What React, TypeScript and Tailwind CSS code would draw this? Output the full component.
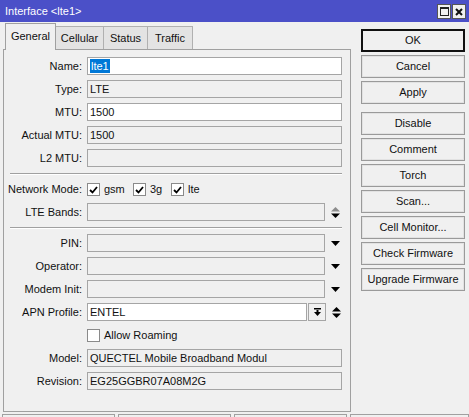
import { ReactNode } from "react";

function Label({ children }: { children: ReactNode }) {
  return <span className="w-[78px] shrink-0 text-right whitespace-nowrap">{children}</span>;
}

function Box({ children, white, w }: { children?: ReactNode; white?: boolean; w: string }) {
  return (
    <div
      className={`ml-[5px] h-[18px] shrink-0 flex items-center pl-[2px] border border-[#a5a5a5] whitespace-nowrap overflow-hidden ${w} ${
        white ? "bg-white" : "bg-[#f0f0f0]"
      }`}
    >
      {children}
    </div>
  );
}

function DownArrow() {
  return (
    <svg width="9" height="5" viewBox="0 0 9 5" className="ml-[6px]">
      <polygon points="0,0 9,0 4.5,5" fill="#000" />
    </svg>
  );
}

function Spinner({ upColor }: { upColor: string }) {
  return (
    <svg width="9" height="11" viewBox="0 0 9 11" className="ml-[6px]">
      <polygon points="0,4.5 9,4.5 4.5,0" fill={upColor} />
      <polygon points="0,6.5 9,6.5 4.5,11" fill="#000" />
    </svg>
  );
}

function Check({ checked }: { checked?: boolean }) {
  return (
    <span className="w-[13px] h-[13px] shrink-0 border border-[#8a8a8a] bg-white flex items-center justify-center">
      {checked && (
        <svg width="9" height="8" viewBox="0 0 9 8">
          <path d="M1 4 L3.5 6.5 L8 1" stroke="#000" strokeWidth="1.8" fill="none" />
        </svg>
      )}
    </span>
  );
}

function Separator({ className }: { className: string }) {
  return <div className={`ml-[6px] w-[332px] h-[2px] border-t border-t-[#a0a0a0] border-b border-b-white ${className}`} />;
}

function Button({ children, primary, className = "" }: { children: ReactNode; primary?: boolean; className?: string }) {
  return (
    <div
      className={`h-[23px] w-[104px] flex items-center justify-center bg-[#f0f0f0] ${
        primary ? "border-2 border-[#111]" : "border border-[#9a9a9a] shadow-[inset_0_0_0_1px_#e2e2e2]"
      } ${className}`}
    >
      {children}
    </div>
  );
}

export default function App() {
  return (
    <div className="w-[469px] h-[417px] overflow-hidden bg-[#f0f0f0] flex flex-col text-[11px] text-[#111] font-['Liberation_Sans',Arial,sans-serif]">
      <div className="h-[22px] shrink-0 bg-[#4b50c8] flex items-center justify-between pl-[5px] pr-[3px]">
        <span className="text-white text-[11px]">Interface &lt;lte1&gt;</span>
        <div className="flex gap-[1px] mt-[1px]">
          <span className="w-[14px] h-[15px] bg-[#f0f0f0] border border-[#555] flex items-center justify-center">
            <span className="w-[9px] h-[9px] border border-[#222] border-t-2" />
          </span>
          <span className="w-[14px] h-[15px] bg-[#f0f0f0] border border-[#555] flex items-center justify-center">
            <svg width="8" height="8" viewBox="0 0 8 8">
              <path d="M1 1 L7 7 M7 1 L1 7" stroke="#111" strokeWidth="2" />
            </svg>
          </span>
        </div>
      </div>

      <div className="flex mt-[1px]">
        <div className="pl-[3px] flex flex-col">
          <div className="flex items-end h-[27px] pl-[2px] -mb-px relative z-10">
            <div className="w-[51px] h-[27px] border border-b-0 border-[#a0a0a0] bg-[#f0f0f0] flex items-center justify-center pb-[2px]">
              General
            </div>
            <div className="w-[48px] h-[23px] mb-px border border-l-0 border-b-0 border-[#b0b0b0] bg-[#e3e3e3] flex items-center justify-center">
              Cellular
            </div>
            <div className="w-[44px] h-[23px] mb-px border border-l-0 border-b-0 border-[#b0b0b0] bg-[#e3e3e3] flex items-center justify-center">
              Status
            </div>
            <div className="w-[45px] h-[23px] mb-px border border-l-0 border-b-0 border-[#b0b0b0] bg-[#e3e3e3] flex items-center justify-center">
              Traffic
            </div>
          </div>

          <div className="w-[348px] h-[363px] border border-[#a0a0a0] flex flex-col pt-[7px]">
            <div className="flex items-center h-[18px]">
              <Label>Name:</Label>
              <Box white w="w-[255px]">
                <span className="bg-[#0078d7] text-white px-[1px] leading-[14px]">lte1</span>
              </Box>
            </div>
            <div className="flex items-center h-[18px] mt-[5px]">
              <Label>Type:</Label>
              <Box w="w-[255px]">LTE</Box>
            </div>
            <div className="flex items-center h-[18px] mt-[5px]">
              <Label>MTU:</Label>
              <Box white w="w-[255px]">1500</Box>
            </div>
            <div className="flex items-center h-[18px] mt-[5px]">
              <Label>Actual MTU:</Label>
              <Box w="w-[255px]">1500</Box>
            </div>
            <div className="flex items-center h-[18px] mt-[5px]">
              <Label>L2 MTU:</Label>
              <Box w="w-[255px]" />
            </div>

            <Separator className="mt-[6px]" />

            <div className="flex items-center h-[17px] mt-[6px]">
              <Label>Network Mode:</Label>
              <div className="ml-[5px] flex items-center">
                <span className="w-[46px] flex items-center gap-[4px]">
                  <Check checked />
                  gsm
                </span>
                <span className="w-[38px] flex items-center gap-[4px]">
                  <Check checked />
                  3g
                </span>
                <span className="flex items-center gap-[4px]">
                  <Check checked />
                  lte
                </span>
              </div>
            </div>
            <div className="flex items-center h-[18px] mt-[5px]">
              <Label>LTE Bands:</Label>
              <Box w="w-[238px]" />
              <Spinner upColor="#8c8c8c" />
            </div>

            <Separator className="mt-[6px]" />

            <div className="flex items-center h-[18px] mt-[5px]">
              <Label>PIN:</Label>
              <Box w="w-[238px]" />
              <DownArrow />
            </div>
            <div className="flex items-center h-[18px] mt-[5px]">
              <Label>Operator:</Label>
              <Box w="w-[238px]" />
              <DownArrow />
            </div>
            <div className="flex items-center h-[18px] mt-[5px]">
              <Label>Modem Init:</Label>
              <Box w="w-[238px]" />
              <DownArrow />
            </div>
            <div className="flex items-center h-[18px] mt-[5px]">
              <Label>APN Profile:</Label>
              <Box white w="w-[220px]">ENTEL</Box>
              <div className="ml-px w-[18px] h-[18px] border border-[#a5a5a5] flex items-center justify-center">
                <svg width="7" height="8" viewBox="0 0 7 8">
                  <rect x="0" y="0" width="7" height="1.5" fill="#000" />
                  <rect x="2.5" y="2" width="2" height="2.5" fill="#000" />
                  <polygon points="0,4 7,4 3.5,8" fill="#000" />
                </svg>
              </div>
              <Spinner upColor="#000" />
            </div>
            <div className="flex items-center h-[17px] mt-[6px] pl-[83px] gap-[4px]">
              <Check />
              Allow Roaming
            </div>
            <div className="flex items-center h-[18px] mt-[5px]">
              <Label>Model:</Label>
              <Box w="w-[255px]">QUECTEL Mobile Broadband Modul</Box>
            </div>
            <div className="flex items-center h-[18px] mt-[5px]">
              <Label>Revision:</Label>
              <Box w="w-[255px]">EG25GGBR07A08M2G</Box>
            </div>
          </div>
        </div>

        <div className="ml-[10px] mt-[6px] flex flex-col">
          <Button primary>OK</Button>
          <Button className="mt-[3px]">Cancel</Button>
          <Button className="mt-[3px]">Apply</Button>
          <Button className="mt-[8px]">Disable</Button>
          <Button className="mt-[3px]">Comment</Button>
          <Button className="mt-[3px]">Torch</Button>
          <Button className="mt-[3px]">Scan...</Button>
          <Button className="mt-[3px]">Cell Monitor...</Button>
          <Button className="mt-[3px]">Check Firmware</Button>
          <Button className="mt-[3px]">Upgrade Firmware</Button>
        </div>
      </div>

      <div className="flex gap-[3px] pl-[2px] mt-[2px]">
        <div className="w-[113px] h-[20px] border border-[#a0a0a0]" />
        <div className="w-[113px] h-[20px] border border-[#a0a0a0]" />
        <div className="w-[113px] h-[20px] border border-[#a0a0a0]" />
        <div className="w-[119px] h-[20px] border border-[#a0a0a0]" />
      </div>
    </div>
  );
}
